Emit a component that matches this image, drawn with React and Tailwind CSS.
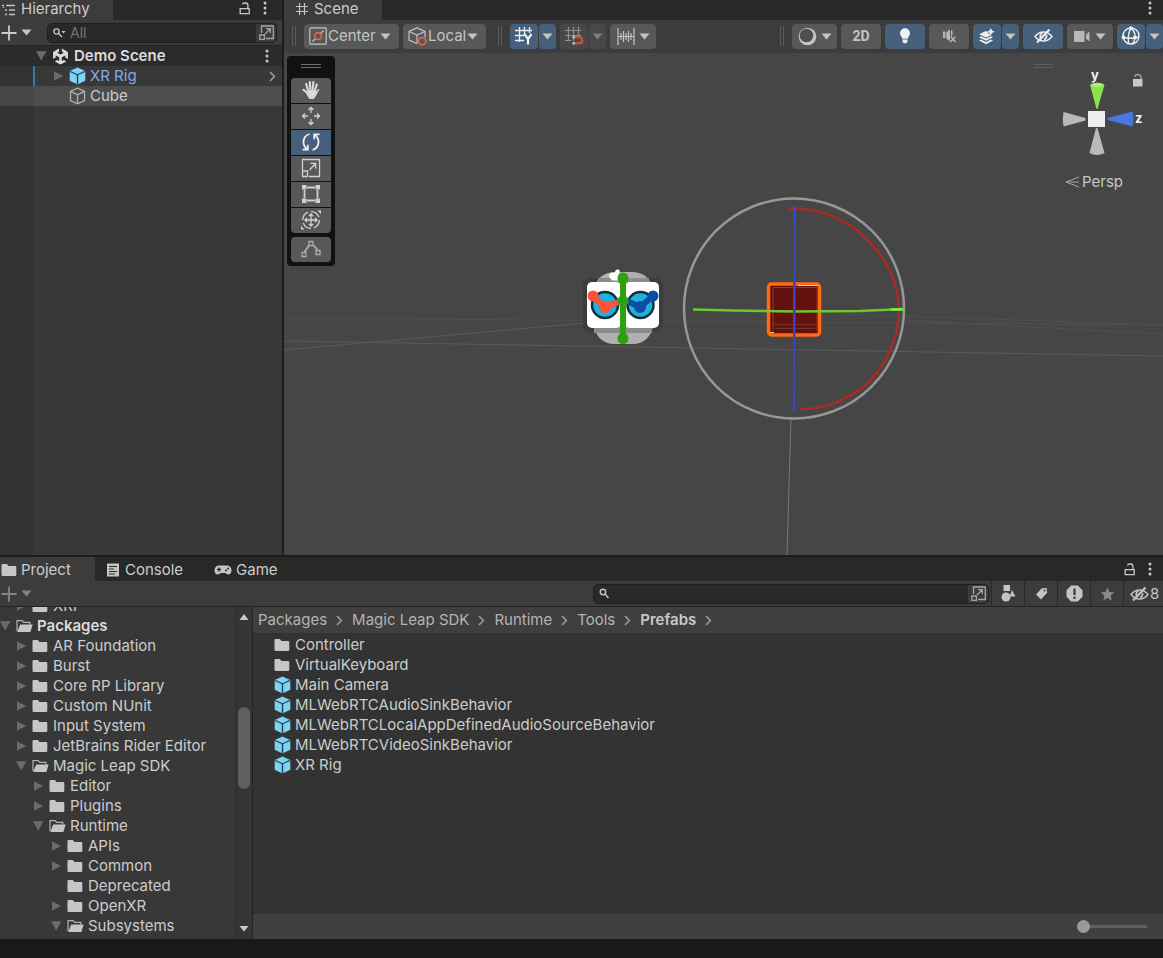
import React, { useState } from 'react';

const packages = [
  { name: 'XRI', depth: 1, state: 'closed' },
  { name: 'Packages', depth: 0, state: 'open', bold: true },
  { name: 'AR Foundation', depth: 1, state: 'closed' },
  { name: 'Burst', depth: 1, state: 'closed' },
  { name: 'Core RP Library', depth: 1, state: 'closed' },
  { name: 'Custom NUnit', depth: 1, state: 'closed' },
  { name: 'Input System', depth: 1, state: 'closed' },
  { name: 'JetBrains Rider Editor', depth: 1, state: 'closed' },
  { name: 'Magic Leap SDK', depth: 1, state: 'open' },
  { name: 'Editor', depth: 2, state: 'closed' },
  { name: 'Plugins', depth: 2, state: 'closed' },
  { name: 'Runtime', depth: 2, state: 'open' },
  { name: 'APIs', depth: 3, state: 'closed' },
  { name: 'Common', depth: 3, state: 'closed' },
  { name: 'Deprecated', depth: 3, state: 'leaf' },
  { name: 'OpenXR', depth: 3, state: 'closed' },
  { name: 'Subsystems', depth: 3, state: 'open' },
];

const assets = [
  { name: 'Controller', type: 'folder' },
  { name: 'VirtualKeyboard', type: 'folder' },
  { name: 'Main Camera', type: 'prefab' },
  { name: 'MLWebRTCAudioSinkBehavior', type: 'prefab' },
  { name: 'MLWebRTCLocalAppDefinedAudioSourceBehavior', type: 'prefab' },
  { name: 'MLWebRTCVideoSinkBehavior', type: 'prefab' },
  { name: 'XR Rig', type: 'prefab' },
];

const crumbs = ['Packages', 'Magic Leap SDK', 'Runtime', 'Tools'];

const indent = ['pl-0', 'pl-4', 'pl-[33px]', 'pl-[51px]'];

const Caret = ({ className = 'text-[#c4c4c4]' }) => (
  <svg width="11" height="7" viewBox="0 0 11 7" fill="currentColor" className={`shrink-0 ${className}`}>
    <path d="M0.5 0.5h10L5.5 6.5z" />
  </svg>
);

const Arrow = ({ state }) => (
  <svg width="11" height="12" viewBox="0 0 11 12" fill="#6b6b6b" className="shrink-0">
    {state === 'closed' && <path d="M1 1.2v9.6L10.2 6z" />}
    {state === 'open' && <path d="M0 1.2h10.4L5.2 10.6z" />}
  </svg>
);

const Folder = () => (
  <svg width="16" height="14" viewBox="0 0 16 14" className="shrink-0">
    <path d="M.5 2.2Q.5 1 1.7 1h4.1l1.7 2h6.6q1.2 0 1.2 1.2v7.6q0 1.2-1.2 1.2H1.7Q.5 13 .5 11.8z" fill="#c6c6c6" />
  </svg>
);

const FolderOpen = () => (
  <svg width="17" height="14" viewBox="0 0 17 14" className="-mr-px shrink-0">
    <path d="M1 12V1.6h5.2l1.5 1.8h6.1v2" fill="none" stroke="#b4b4b4" strokeWidth="1.2" />
    <path d="M4.2 5.6h12.4L14.4 13H1.2z" fill="#c6c6c6" />
  </svg>
);

const PrefabCube = () => (
  <svg width="17" height="18" viewBox="0 0 17 18" className="-mr-px shrink-0">
    <path d="M8.5.5L16.3 3.9v9.9L8.5 17.6.7 13.8V3.9z" fill="#7fd3f5" />
    <path d="M1 4.3l7.5 3.5L16 4.3" fill="none" stroke="#2a546b" strokeWidth="1.3" />
    <path d="M8.5 7.8v9.6" stroke="#1d4052" strokeWidth="1.4" />
  </svg>
);

const OutlineCube = () => (
  <svg width="17" height="18" viewBox="0 0 17 18" fill="none" stroke="#b0b0b0" strokeWidth="1.3" className="-mr-px shrink-0">
    <path d="M8.5 1.2l7 3.2v9.2l-7 3.3-7-3.3V4.4zM1.5 4.4l7 3.3 7-3.3M8.5 7.7v9.2" />
  </svg>
);

const UnityLogo = () => (
  <svg width="17" height="17" viewBox="0 0 16 17" className="shrink-0">
    <path d="M6.6.6v3L4.7 4.7 8 6.6l3.3-1.9-1.9-1.1v-3l6 3.5v7l-2.6-1.5V7.4L9.3 9.3v3.9l1.9-1.1 2.6 1.5L8 16.6l-5.8-3 2.6-1.5 1.9 1.1V9.3L3.2 7.4v2.2L.6 11.1v-7z" fill="#dcdcdc" />
  </svg>
);

const Lock = () => (
  <svg width="12" height="13" viewBox="0 0 12 13" fill="none" stroke="#c8c8c8" strokeWidth="1.3">
    <path d="M1.2 6.6h9v5h-9zM8.9 6.4V3.2Q8.9 1 6.6 1H5.4Q3.7 1 3.6 2.5" />
  </svg>
);

const Kebab = () => (
  <svg width="4" height="14" viewBox="0 0 4 14" fill="#c8c8c8">
    <circle cx="2" cy="2" r="1.5" />
    <circle cx="2" cy="7" r="1.5" />
    <circle cx="2" cy="12" r="1.5" />
  </svg>
);

const Plus = () => (
  <svg width="16" height="16" viewBox="0 0 16 16" fill="none" stroke="currentColor" strokeWidth="1.8">
    <path d="M8 .5v15M.5 8h15" />
  </svg>
);

const OpenSearch = () => (
  <svg width="15" height="15" viewBox="0 0 15 15" fill="none" stroke="#a5a5a5" strokeWidth="1.3">
    <path d="M2.500 8V1h11.800v12.500H7" />
    <path d="M.8 10h4.600v4.400H.8zM6 9l5-5M7 3.700h4.300v4.200" />
  </svg>
);

const Chevron = () => (
  <svg width="7" height="11" viewBox="0 0 7 11" fill="none" stroke="#9a9a9a" strokeWidth="1.6" className="shrink-0">
    <path d="M1 1l4.400 4.500L1 10" />
  </svg>
);

const EyeOff = () => (
  <svg width="19" height="16" viewBox="0 0 19 16" fill="none" stroke="currentColor">
    <path d="M1 8.500Q4.500 4 9.500 4t8.500 4.500Q14.500 13 9.500 13T1 8.500z" strokeWidth="1.400" />
    <path d="M6.500 10Q5.500 6 8.500 5M12.500 7q.5 3.500-2.500 4.500" strokeWidth="1.800" />
    <path d="M3 14.500L15.500 1.500" strokeWidth="2.200" />
  </svg>
);

const Grip = () => (
  <span className="mr-1 flex h-5 w-1 shrink-0 justify-between">
    <span className="w-px bg-[#5c5c5c]" />
    <span className="w-px bg-[#5c5c5c]" />
  </span>
);

const ToolButton = ({ label, active, dim, width = 'w-10', children }) => (
  <button
    type="button"
    aria-label={label}
    className={`flex h-[25px] shrink-0 items-center justify-center gap-1 rounded-sm ${width} ${
      active ? 'bg-[#46607c] text-[#eeeeee]' : dim ? 'bg-[#484848] text-[#8a8a8a]' : 'bg-[#585858] text-[#c4c4c4]'
    }`}
  >
    {children}
  </button>
);

// Icon button with its own drop-down arrow
const SplitButton = ({ label, active, dim, children }) => (
  <div className="flex shrink-0 gap-px">
    <ToolButton label={label} active={active} dim={dim} width="w-7">
      {children}
    </ToolButton>
    <ToolButton label={`${label} options`} active={active} dim={dim} width="w-[17px]">
      <Caret className={dim ? 'text-[#7d7d7d]' : 'text-[#c4c4c4]'} />
    </ToolButton>
  </div>
);

const ToolSelect = ({ label, options, width, icon }) => (
  <label className={`relative flex h-[25px] shrink-0 items-center rounded-sm bg-[#585858] pl-[5px] ${width}`}>
    {icon}
    <select aria-label={label} className="w-full appearance-none bg-transparent pl-px text-[15px] leading-5 text-[#c4c4c4] outline-none">
      {options.map((option) => (
        <option key={option}>{option}</option>
      ))}
    </select>
    <span className="pointer-events-none absolute right-2">
      <Caret />
    </span>
  </label>
);

const Hierarchy = () => {
  const [query, setQuery] = useState('');

  return (
    <aside className="flex w-[284px] shrink-0 flex-col border-r-2 border-[#1c1c1c] bg-[#383838]">
      <div className="flex h-5 items-center bg-[#282828] pr-[15px]">
        <div className="flex h-5 w-[113px] items-center gap-1 bg-[#3c3c3c] pl-0.5">
          <svg width="15" height="12" viewBox="0 0 15 12" fill="none" stroke="#c4c4c4" strokeWidth="1.4">
            <path d="M0 1.500h2M4 1.500h9M3 6h2M7 6h6M3 10.500h2M7 10.500h6" />
            <path d="M1.500 3v1" />
          </svg>
          <h2 className="pb-0.5">Hierarchy</h2>
        </div>
        <div className="ml-auto flex items-center gap-3 pb-1">
          <button type="button" aria-label="Lock hierarchy"><Lock /></button>
          <button type="button" aria-label="Hierarchy menu"><Kebab /></button>
        </div>
      </div>
      <div className="flex h-[26px] items-center border-b border-[#232323] bg-[#3c3c3c] pr-[5px]">
        <button type="button" aria-label="Create object" className="flex items-center gap-1 pl-px">
          <Plus />
          <Caret />
        </button>
        <div className="ml-auto flex h-5 w-[230px] items-center rounded-[5px] border border-[#1e1e1e] bg-[#292929] pl-[5px]">
          <svg width="13" height="12" viewBox="0 0 13 12" fill="none" stroke="#c4c4c4" strokeWidth="1.4" className="shrink-0">
            <circle cx="3.500" cy="4.500" r="2.600" />
            <path d="M5.500 6.500L9 10" />
            <path d="M8.500 4h4l-2 2.500z" fill="#c4c4c4" stroke="none" />
          </svg>
          <input
            aria-label="Search hierarchy"
            placeholder="All"
            value={query}
            onChange={(e) => setQuery(e.target.value)}
            className="min-w-0 flex-1 bg-transparent pl-1 text-sm leading-4 outline-none placeholder:text-[#757575]"
          />
          <button type="button" aria-label="Open search window" className="flex h-full w-5 items-center justify-center rounded-r-[5px] bg-[#3c3c3c]">
            <OpenSearch />
          </button>
        </div>
      </div>
      <div className="flex h-5 items-center gap-[5px] bg-[#2b2b2b] pl-9 pr-[13px]">
        <Arrow state="open" />
        <UnityLogo />
        <span className="flex-1 font-semibold text-[#dcdcdc]">Demo Scene</span>
        <button type="button" aria-label="Scene menu"><Kebab /></button>
      </div>
      <div className="flex h-5">
        <div className="w-[35px] border-r-2 border-[#2f7cab] bg-[#333333]" />
        <div className="flex flex-1 items-center gap-[5px] pl-[18px] pr-1.5">
          <Arrow state="closed" />
          <PrefabCube />
          <span className="flex-1 text-[#82aaeb]">XR Rig</span>
          <Chevron />
        </div>
      </div>
      <div className="flex h-5 bg-[#4d4d4d]">
        <div className="w-[33px] bg-[#464646]" />
        <div className="flex flex-1 items-center gap-[5px] pl-5">
          <Arrow state="leaf" />
          <OutlineCube />
          <span>Cube</span>
        </div>
      </div>
      <div className="w-[33px] flex-1 bg-[#333333]" />
    </aside>
  );
};

const SceneToolbar = () => (
  <div className="flex h-[33px] items-center gap-1 bg-[#3c3c3c] pb-px pl-2">
    <Grip />
    <ToolSelect
      label="Tool handle position"
      options={['Center', 'Pivot']}
      width="w-[95px]"
      icon={
        <svg width="18" height="18" viewBox="0 0 18 18" fill="none" stroke="#c4c4c4" strokeWidth="1.2" className="shrink-0">
          <rect x=".8" y=".8" width="16.4" height="16.4" rx="1" />
          <path d="M3.500 14.500l3-3M11.500 6.500l3-3" />
          <circle cx="9" cy="9" r="3.4" stroke="#e0694a" strokeWidth="1.6" />
        </svg>
      }
    />
    <ToolSelect
      label="Tool handle rotation"
      options={['Local', 'Global']}
      width="w-[83px]"
      icon={
        <svg width="19" height="19" viewBox="0 0 19 19" fill="none" stroke="#c4c4c4" strokeWidth="1.2" className="shrink-0">
          <path d="M9 16.500l-8-3.500V4.500L9 1l8 3.500V10M1 4.500L9 8l8-3.500M9 8v8.500" />
          <circle cx="14.2" cy="14.2" r="3.6" stroke="#e0694a" strokeWidth="1.6" />
        </svg>
      }
    />
    <div className="w-1" />
    <Grip />
    <SplitButton label="Grid visibility" active>
      <svg width="18" height="18" viewBox="0 0 18 18" fill="none" stroke="#f0f0f0" strokeWidth="1.3">
        <path d="M4.500 0v15M9.500 0v8M14.500 0v6M0 3.500h17M0 8.500h9M0 13.500h9" />
        <path d="M9.500 7l3.500 5v5.500M16.500 7L13 12" strokeWidth="2.2" />
      </svg>
    </SplitButton>
    <SplitButton label="Grid snapping" dim>
      <svg width="19" height="18" viewBox="0 0 19 18" fill="none" stroke="#8f8f8f" strokeWidth="1.2">
        <path d="M3.500 0v14M8.500 0v14M13.500 0v8M0 3.500h16M0 8.500h16M0 13.500h6" />
        <path d="M10 10.300h4q3.200 0 3.200 3t-3.200 3h-4" stroke="#b35540" strokeWidth="2.6" />
        <path d="M7.500 10.300H10M7.500 16.300H10" stroke="#c0c0c0" strokeWidth="2.6" />
      </svg>
    </SplitButton>
    <ToolButton label="Snap increment" width="w-[46px]">
      <svg width="18" height="17" viewBox="0 0 18 17" fill="none" stroke="#c4c4c4" strokeWidth="1.2">
        <path d="M1 0v17M17 0v17M1 8.500h16M4 5v7M6.500 3v11M9 5v7M11.500 3v11M14 5v7" />
      </svg>
      <Caret />
    </ToolButton>

    <div className="ml-auto flex items-center gap-1">
      <Grip />
      <ToolButton label="Draw mode" width="w-[45px]">
        <svg width="19" height="19" viewBox="0 0 19 19">
          <circle cx="9.5" cy="9.5" r="8.8" fill="#c4c4c4" />
          <circle cx="8.5" cy="8.5" r="6.8" fill="#505050" />
        </svg>
        <Caret />
      </ToolButton>
      <ToolButton label="2D view">
        <span className="font-[Roboto] text-sm font-bold">2D</span>
      </ToolButton>
      <ToolButton label="Scene lighting" active>
        <svg width="12" height="16" viewBox="0 0 12 16" fill="#f0f0f0">
          <path d="M6 .3a5 5 0 0 1 5 5c0 2.300-1.800 3.200-2.300 5.500H3.300C2.800 8.500 1 7.600 1 5.300a5 5 0 0 1 5-5zM3.500 11.600h5v2l-1.300 1.700H4.800L3.500 13.600z" />
        </svg>
      </ToolButton>
      <ToolButton label="Scene audio">
        <svg width="15" height="14" viewBox="0 0 15 14" fill="#b8b8b8">
          <path d="M1 2.500h2.300v6.500H1zM4.200 3.500L8 .5v12L4.200 9.500zM9 1l1.500 1v4L9 7.500z" />
          <path d="M8.500 7.500l5 5.500M13.500 7.500l-5 5.500" stroke="#b8b8b8" strokeWidth="1.3" />
        </svg>
      </ToolButton>
      <SplitButton label="Effects" active>
        <svg width="18" height="17" viewBox="0 0 18 17" fill="#eeeeee">
          <path d="M8 3L1 6.200l7 3.400 5.500-2.600-2.700-1.300L9.500 4z" />
          <path d="M1 9.300l2-1 5 2.300 5-2.300 2 1-7 3.400zM1 12.600l2-1 5 2.300 5-2.300 2 1L8 16.200z" />
          <path d="M12.800 0l1.200 2.600L16.800 3.800 14 5l-1.200 2.600L11.600 5 9 3.800l2.600-1.200z" />
        </svg>
      </SplitButton>
      <ToolButton label="Hidden objects" active>
        <EyeOff />
      </ToolButton>
      <ToolButton label="Scene camera" width="w-[46px]">
        <svg width="17" height="11" viewBox="0 0 17 11" fill="#b8b8b8">
          <path d="M0 0h10.500v11H0zM12 3.500L15.500.500v10L12 7.500z" />
        </svg>
        <Caret />
      </ToolButton>
      <SplitButton label="Gizmos" active>
        <svg width="20" height="20" viewBox="0 0 20 20" fill="none" stroke="#eeeeee" strokeWidth="1.4">
          <circle cx="10" cy="10" r="8" />
          <path d="M10 2Q6.500 7 7.500 17.500M10 2q4.500 4 4 9T11 18M2 11q6 2.500 16 0" />
          <g fill="#eeeeee" stroke="none">
            <circle cx="10" cy="2.3" r="2" />
            <circle cx="2.5" cy="11.5" r="2" />
            <circle cx="14" cy="11.5" r="2" />
          </g>
        </svg>
      </SplitButton>
    </div>
  </div>
);

const tools = [
  {
    name: 'View tool',
    icon: (
      <g fill="none" stroke="#d8d8d8" strokeLinecap="round" strokeWidth="2.2">
        <path d="M7 10L5.200 4M9.300 9L8.800 2M11.700 9l.7-7M14 10l1.800-5.500M6.500 13L2.500 9.800" />
        <path d="M6.500 10.500h7.800l1.700 1 2-2.500-3.300 6.500-2 3H8.600L5.800 14z" fill="#d8d8d8" strokeWidth="1" />
      </g>
    ),
  },
  { name: 'Move tool', icon: <path d="M10 1.500V7M10 13v5.500M1.500 10H7M13 10h5.500M7.500 4L10 1.500 12.500 4M7.500 16l2.500 2.500 2.500-2.500M4 7.500L1.500 10 4 12.500M16 7.500l2.500 2.500-2.500 2.500" /> },
  {
    name: 'Rotate tool',
    active: true,
    icon: <path stroke="#eeeeee" strokeWidth="1.8" d="M8.500 2Q2.500 4 2.500 10q0 4.500 4 7.500M1.500 17.700h5.300v-5M11.500 18q6-2 6-8 0-4.500-4-7.500M18.500 2.300h-5.300v5" />,
  },
  { name: 'Scale tool', icon: <path d="M1.500 12V1.500h17v17H8M1.500 13h5v5.500h-5zM8.500 12l6-6.500M9.500 5.300h5.200v5.200" /> },
  {
    name: 'Rect tool',
    icon: (
      <>
        <path d="M3.500 6v8M16.500 6v8M6 3.500h8M6 16.500h8" strokeWidth="1.8" />
        <path d="M1 1h4.500v4.500H1zM14.500 1H19v4.500h-4.500zM1 14.500h4.500V19H1zM14.500 14.500H19V19h-4.500z" fill="#d0d0d0" stroke="none" />
      </>
    ),
  },
  {
    name: 'Transform tool',
    icon: (
      <>
        <circle cx="10" cy="10" r="8.3" strokeDasharray="10 3" />
        <path d="M10 4v12M4 10h12M8 6l2-2 2 2M8 14l2 2 2-2M6 8l-2 2 2 2M14 8l2 2-2 2" />
        <path d="M16.500.5H20V4zM0 16v3.500h3.500z" fill="#d0d0d0" stroke="none" />
      </>
    ),
  },
];

const ToolIcon = ({ children }) => (
  <svg width="20" height="20" viewBox="0 0 20 20" fill="none" stroke="#d0d0d0" strokeWidth="1.3">
    {children}
  </svg>
);

const ToolPalette = () => (
  <div className="absolute left-[3px] top-[3px] w-12 rounded bg-[#111111] p-1 pt-0">
    <div className="flex h-[22px] flex-col items-center justify-center gap-0.5 pb-0.5">
      <span className="h-px w-5 bg-[#707070]" />
      <span className="h-px w-5 bg-[#707070]" />
    </div>
    <div className="flex flex-col gap-px overflow-hidden rounded">
      {tools.map((tool) => (
        <button
          key={tool.name}
          type="button"
          aria-label={tool.name}
          className={`flex h-[25px] items-center justify-center pb-px ${tool.active ? 'bg-[#46607c]' : 'bg-[#585858]'}`}
        >
          <ToolIcon>{tool.icon}</ToolIcon>
        </button>
      ))}
    </div>
    <button type="button" aria-label="Edit path" className="mt-1 flex h-[25px] w-full items-center justify-center rounded bg-[#585858] pb-px">
      <ToolIcon>
        <path d="M1 13.500h4v4H1zM15 11.500h4v4h-4zM8 2.500h4v4H8z" stroke="#aaaaaa" />
        <path d="M3.500 13L8 6.500M12.500 6l4 5" stroke="#aaaaaa" strokeWidth="2" />
      </ToolIcon>
    </button>
  </div>
);

const AxisGizmo = () => (
  <div className="absolute right-0 top-2 w-[130px]">
    <svg width="130" height="105" viewBox="1033 61 130 105" className="block font-[Inter] font-bold">
      <path d="M1033.500 64.500h20M1033.500 67.500h20" stroke="#5e5e5e" />
      <path d="M1090 85l6.500 24h1l7-24q-7-4.500-14.500 0z" fill="#8fe14c" />
      <path d="M1090 85q7-4.500 14.500 0-7 4-14.500 0z" fill="#a9f06c" />
      <path d="M1063.500 112q-1.500 7 0 14.500l22-6v-2.500z" fill="#b9b9b9" />
      <path d="M1132.500 111.500q2 7.500 0 15l-25-6.500v-2z" fill="#4a76e0" />
      <path d="M1089.500 153l6.500-25h1.500l7 25q-7.500 4-15 0z" fill="#b9b9b9" />
      <path d="M1088 111h17v16h-17z" fill="#efefef" />
      <text x="1091" y="80" fontSize="13" fill="#f2f2f2">y</text>
      <text x="1135" y="123" fontSize="13" fill="#f2f2f2">z</text>
      <path d="M1133 79h9.500v7.500h-9.500z" fill="#c8c8c8" />
      <path d="M1141 79v-1.500q0-3-3-3t-3 2.500" fill="none" stroke="#9a9a9a" strokeWidth="1.5" />
    </svg>
    <button type="button" className="ml-8 mt-[6px] flex items-center gap-[3px] text-[#c8c8c8]">
      <svg width="14" height="12" viewBox="0 0 14 12" fill="none" stroke="#a8a8a8">
        <path d="M14 1L1 6l13 5M1 6h13" />
      </svg>
      Persp
    </button>
  </div>
);

const SceneCanvas = () => (
  <svg viewBox="284 53 879 502" preserveAspectRatio="xMidYMid slice" className="block h-full w-full" fill="none">
    {/* ground grid */}
    <g stroke="#5a5a5a">
      <path d="M284 350L585 323M284 341L1163 356" />
      <path d="M284 318L1163 325M840 314L1163 325M900 320L1163 334" stroke="#505050" />
      <path d="M791 418L787 555" stroke="#7a7a7a" />
    </g>

    {/* camera rig icon */}
    <rect x="583" y="278" width="80" height="54" rx="8" fill="#3c3c3c" />
    <rect x="594" y="272" width="59" height="72" rx="20" fill="#b0b0b0" />
    <path d="M598 278h51v6h-51zM594 328h58v5h-58z" fill="#8c8c8c" />
    <rect x="587" y="282" width="34" height="46" rx="5" fill="#ffffff" />
    <rect x="625" y="282" width="34" height="46" rx="5" fill="#ffffff" />
    <circle cx="605" cy="305" r="13" fill="#1fb0dc" stroke="#122e3a" strokeWidth="2.5" />
    <circle cx="640.5" cy="305" r="13" fill="#1fb0dc" stroke="#122e3a" strokeWidth="2.5" />
    <path d="M611 279q-4-4 0-6 2-1 4 0 0-4 3-3.500t1 4l1 7h-8z" fill="#ffffff" />
    <path d="M593 296l12 11 16-6" stroke="#ff5038" strokeWidth="6" strokeLinejoin="round" />
    <circle cx="593" cy="296" r="5.5" fill="#ff5038" />
    <circle cx="605" cy="307" r="6" fill="#ff5038" />
    <path d="M627 301l13 6 13-11" stroke="#0a4fa5" strokeWidth="6" strokeLinejoin="round" />
    <circle cx="653" cy="296" r="5.5" fill="#0a4fa5" />
    <circle cx="640" cy="307" r="6" fill="#0a4fa5" />
    <path d="M623 278v60" stroke="#2ba30c" strokeWidth="6" />
    <g fill="#2ba30c">
      <circle cx="623" cy="278" r="5.5" />
      <circle cx="623" cy="301" r="5.5" />
      <circle cx="623" cy="338.5" r="5.5" />
    </g>

    {/* selected cube */}
    <rect x="768.5" y="284" width="51" height="51" rx="3" fill="#63100e" stroke="#ff6a13" strokeWidth="3.5" />
    <path d="M773 287.500h44M773 287v44M817 287v44" stroke="#8f3a2a" />
    <path d="M774 324.500h42M775 328.500h40" stroke="#75342e" />
    <path d="M798 285.500h20M770 332.500h4" stroke="#ffd27a" />

    {/* rotation handles */}
    <circle cx="794" cy="308.500" r="110" stroke="#979797" strokeWidth="2.5" />
    <path d="M788 209q40-2 72 24c28 24 38 52 39 76 0 30-14 60-36 78q-28 22-63 22" stroke="#a82a24" strokeWidth="2.5" />
    <path d="M693 309.500l40 1 61 1 66-.5 43-2" stroke="#6cc832" strokeWidth="2.5" />
    <path d="M891 309.500h12" stroke="#7cf03c" strokeWidth="2.5" />
    <path d="M794.500 206L794 412" stroke="#3a46b4" strokeWidth="2.5" />
    <path d="M794.500 206v17" stroke="#3246e0" strokeWidth="3" />
  </svg>
);

const Scene = () => (
  <section className="flex min-w-0 flex-1 flex-col">
    <div className="flex h-5 items-center bg-[#282828] pr-[11px]">
      <div className="flex h-5 w-[98px] items-center gap-[5px] bg-[#3c3c3c] pl-[11px]">
        <svg width="14" height="14" viewBox="0 0 14 14" fill="none" stroke="#c4c4c4" strokeWidth="1.2" className="mb-0.5">
          <path d="M4.500 1v12M9.500 1v12M1 4.500h12M1 9.500h12" />
        </svg>
        <h2 className="pb-0.5">Scene</h2>
      </div>
      <button type="button" aria-label="Scene tab menu" className="ml-auto pb-1"><Kebab /></button>
    </div>
    <SceneToolbar />
    <div className="relative min-h-0 flex-1 bg-[#464646]">
      <SceneCanvas />
      <ToolPalette />
      <AxisGizmo />
    </div>
  </section>
);

const FilterButton = ({ label, children }) => (
  <button type="button" aria-label={label} className="flex h-full w-[33px] shrink-0 items-center justify-center border-l border-[#292929] text-[#c4c4c4]">
    {children}
  </button>
);

const ProjectToolbar = () => {
  const [query, setQuery] = useState('');

  return (
    <div className="flex h-[26px] shrink-0 items-center border-b border-[#232323] bg-[#3c3c3c]">
      <button type="button" aria-label="Create asset" className="flex items-center gap-1 pl-px text-[#858585]">
        <Plus />
        <Caret className="text-[#858585]" />
      </button>
      <div className="ml-auto mr-0.5 flex h-5 w-[396px] items-center rounded-[5px] border border-[#1e1e1e] bg-[#292929] pl-[5px]">
        <svg width="11" height="11" viewBox="0 0 11 11" fill="none" stroke="#c4c4c4" strokeWidth="1.5" className="shrink-0">
          <circle cx="4" cy="4" r="2.7" />
          <path d="M6 6l3.500 4" />
        </svg>
        <input
          aria-label="Search project"
          value={query}
          onChange={(e) => setQuery(e.target.value)}
          className="min-w-0 flex-1 bg-transparent pl-1 text-sm leading-4 outline-none"
        />
        <button type="button" aria-label="Open search window" className="flex h-full w-5 items-center justify-center rounded-r-[5px] bg-[#3c3c3c]">
          <OpenSearch />
        </button>
      </div>
      <FilterButton label="Search by type">
        <svg width="15" height="17" viewBox="0 0 14 17" fill="currentColor">
          <path d="M2 0h6.500v6H2zM10.500 5L14 11.500H8z" />
          <circle cx="4.5" cy="12" r="4.5" />
        </svg>
      </FilterButton>
      <FilterButton label="Search by label">
        <svg width="13" height="13" viewBox="0 0 13 13" fill="currentColor" fillRule="evenodd">
          <path d="M6.500 1.500L11.500.8l.7 5L6 12.500 1 7.500zM9.500 2.500a1 1 0 1 0 0 2 1 1 0 0 0 0-2z" />
        </svg>
      </FilterButton>
      <FilterButton label="Search by import log">
        <svg width="17" height="17" viewBox="0 0 17 17">
          <path d="M5.200.5h6.600l4.700 4.700v6.600l-4.700 4.700H5.200L.5 11.800V5.200z" fill="#c4c4c4" />
          <path d="M8.500 3.500v6.500M8.500 11.500V14" stroke="#3c3c3c" strokeWidth="2.2" />
        </svg>
      </FilterButton>
      <FilterButton label="Favorites">
        <svg width="15" height="14" viewBox="0 0 14 14" fill="#8a8a8a">
          <path d="M7 .5l2 4.400 4.700.5-3.500 3.200 1 4.800L7 11l-4.200 2.400 1-4.800L.3 5.400 5 4.900z" />
        </svg>
      </FilterButton>
      <button type="button" className="flex h-full w-10 shrink-0 items-center gap-px border-l border-[#292929] pl-1.5 text-[#c4c4c4]">
        <EyeOff />
        <span>8</span>
      </button>
    </div>
  );
};

const ProjectTree = () => (
  <div className="flex w-[253px] shrink-0 border-r border-[#232323] bg-[#383838]">
    <ul className="flex min-w-0 flex-1 flex-col justify-end overflow-hidden pb-[3px]">
      {packages.map((item) => (
        <li key={item.name} className={`flex h-5 shrink-0 items-center gap-[5px] ${indent[item.depth]}`}>
          <Arrow state={item.state} />
          {item.state === 'open' ? <FolderOpen /> : <Folder />}
          <span className={`whitespace-nowrap ${item.bold ? 'font-semibold text-[#dcdcdc]' : ''}`}>{item.name}</span>
        </li>
      ))}
    </ul>
    <div className="flex w-[17px] flex-col items-center border-l border-[#303030] bg-[#353535] py-[6px]">
      <svg width="10" height="8" viewBox="0 0 10 8" fill="#c8c8c8" className="shrink-0"><path d="M.5 7L5 1l4.500 6z" /></svg>
      <div className="mt-[86px] h-[82px] w-3 shrink-0 rounded-full bg-[#5f5f5f]" />
      <svg width="10" height="8" viewBox="0 0 10 8" fill="#c8c8c8" className="mt-auto shrink-0"><path d="M.5 1L5 6.500 9.500 1z" /></svg>
    </div>
  </div>
);

const Project = () => {
  const [size, setSize] = useState(0);

  return (
    <section className="flex h-[384px] shrink-0 flex-col border-t-2 border-[#1c1c1c]">
      <div className="flex h-6 shrink-0 items-center bg-[#282828] pr-[11px]">
        <button type="button" className="flex h-6 w-[95px] items-center gap-1 bg-[#3c3c3c] pl-px pt-0.5">
          <Folder />
          Project
        </button>
        <button type="button" className="ml-3 flex items-center gap-[6px] pt-0.5">
          <svg width="12" height="14" viewBox="0 0 12 14">
            <path d="M0 .5h12v13H0z" fill="#c4c4c4" />
            <path d="M2 3.500h8M2 6h5M2 8.500h8M2 11h6" stroke="#2c2c2c" strokeWidth="1.2" />
          </svg>
          Console
        </button>
        <button type="button" className="ml-[31px] flex items-center gap-1 pt-0.5">
          <svg width="18" height="12" viewBox="0 0 18 12">
            <path d="M5 1.500h8a4.500 4.500 0 0 1 4.500 4.700c0 3-1.500 4.300-3.300 4.300-1.700 0-2-1.500-3.500-1.500H7.300c-1.500 0-1.800 1.500-3.500 1.500C2 10.500.5 9.200.5 6.200A4.500 4.500 0 0 1 5 1.500z" fill="#c4c4c4" />
            <path d="M3 5.500h4M5 3.500v4" stroke="#282828" strokeWidth="1.3" />
            <circle cx="12" cy="6.5" r="1" fill="#282828" />
            <circle cx="14" cy="4.5" r="1" fill="#282828" />
          </svg>
          Game
        </button>
        <div className="ml-auto flex items-center gap-3">
          <button type="button" aria-label="Lock project"><Lock /></button>
          <button type="button" aria-label="Project menu"><Kebab /></button>
        </div>
      </div>
      <ProjectToolbar />
      <div className="flex min-h-0 flex-1">
        <ProjectTree />
        <div className="flex min-w-0 flex-1 flex-col bg-[#333333]">
          <nav className="flex h-[26px] items-center gap-[9px] bg-[#3f3f3f] pl-[5px]">
            {crumbs.map((crumb) => (
              <React.Fragment key={crumb}>
                <a href="#" className="text-[#b4b4b4]">{crumb}</a>
                <Chevron />
              </React.Fragment>
            ))}
            <a href="#" className="font-semibold text-[#c8c8c8]">Prefabs</a>
            <Chevron />
          </nav>
          <ul className="flex-1 pl-[21px] pt-0.5">
            {assets.map((asset) => (
              <li key={asset.name} className="flex h-5 items-center gap-[5px]">
                {asset.type === 'folder' ? <Folder /> : <PrefabCube />}
                <span>{asset.name}</span>
              </li>
            ))}
          </ul>
          <div className="flex h-[25px] items-center justify-end bg-[#404040] pr-4">
            <input
              type="range"
              aria-label="Icon size"
              min="0"
              max="100"
              value={size}
              onChange={(e) => setSize(Number(e.target.value))}
              className="h-3 w-[70px] appearance-none bg-transparent [&::-webkit-slider-runnable-track]:h-[3px] [&::-webkit-slider-runnable-track]:bg-[#5e5e5e] [&::-webkit-slider-thumb]:-mt-[5px] [&::-webkit-slider-thumb]:size-[13px] [&::-webkit-slider-thumb]:appearance-none [&::-webkit-slider-thumb]:rounded-full [&::-webkit-slider-thumb]:bg-[#999999]"
            />
          </div>
        </div>
      </div>
    </section>
  );
};

const App = () => (
  <div className="flex h-screen flex-col overflow-hidden bg-[#191919] font-[Inter,sans-serif] text-[15px] leading-5 text-[#cccccc]">
    <main className="flex min-h-0 flex-1">
      <Hierarchy />
      <Scene />
    </main>
    <Project />
    <footer className="h-[19px] shrink-0 bg-[#191919]" />
  </div>
);

export default App;
